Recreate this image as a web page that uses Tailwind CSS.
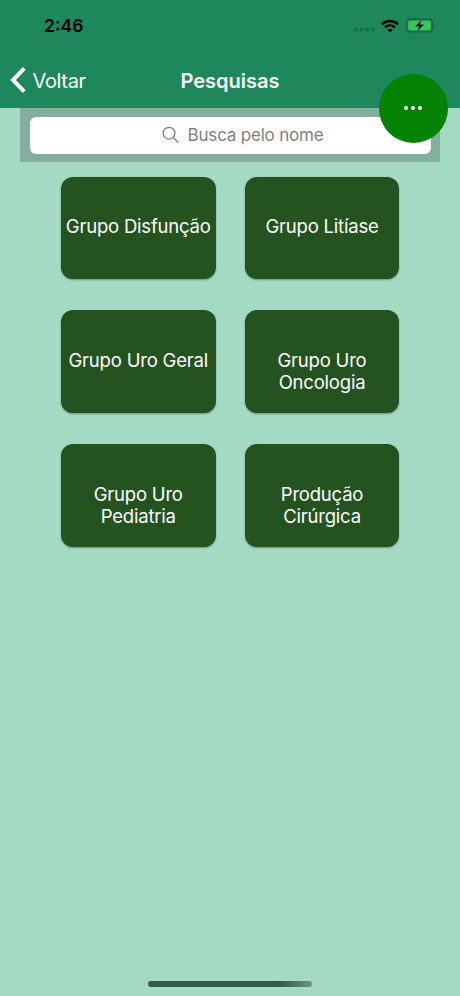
<!DOCTYPE html>
<html lang="pt-BR">

<head>
    <meta charset="UTF-8">
    <meta name="viewport" content="width=device-width, initial-scale=1.0">
    <title>Pesquisas</title>
    <script src="https://cdn.jsdelivr.net/npm/@tailwindcss/browser@4"></script>
</head>

<body class="bg-[#a4dac3] font-['Inter',sans-serif]">
    <div class="relative h-[996px] w-[460px] flex flex-col overflow-hidden">
        <!-- Header -->
        <header class="h-[108px] shrink-0 bg-[#1e875b] flex flex-col">
            <!-- Status bar -->
            <div class="h-[51px] flex justify-between items-center pl-[44px] pr-[24px] text-black">
                <span class="text-[17.5px] leading-none font-semibold">2:46</span>
                <div class="flex items-center">
                    <svg class="mr-[6px] mt-[8px]" width="21" height="5" viewBox="0 0 21 5" fill="#176e49">
                        <rect x="0" y="0.7" width="3.6" height="3.6" rx="1" />
                        <rect x="5.7" y="0.7" width="3.6" height="3.6" rx="1" />
                        <rect x="11.4" y="0.7" width="3.6" height="3.6" rx="1" />
                        <rect x="17.1" y="0.7" width="3.6" height="3.6" rx="1" />
                    </svg>
                    <svg class="mr-[7px]" width="18" height="14" viewBox="0 0 18 14" fill="none" stroke="#000">
                        <path d="M1 5.2C5.4.9 12.6.9 17 5.2" stroke-width="2.6" />
                        <path d="M4 8.3c2.9-2.6 7.1-2.6 10 0" stroke-width="2.4" />
                        <path d="M9 13.5L6.2 10.8c1.6-1.4 4-1.4 5.6 0z" fill="#000" stroke="none" />
                    </svg>
                    <svg width="30" height="15" viewBox="0 0 30 15">
                        <rect x="0.7" y="1.2" width="25.6" height="12.6" rx="3.4" fill="none" stroke="#166241" stroke-width="1.2" />
                        <rect x="2.2" y="2.7" width="22.4" height="9.6" rx="2" fill="#35c759" />
                        <path d="M27.6 5.2c1.8.7 1.8 4 0 4.7z" fill="#166241" />
                        <path d="M15.6 1.5L9.2 8.5h3.9L11.3 13.6 18 6.4h-4z" fill="#000" stroke="#2a9c50" stroke-width="0.4" />
                    </svg>
                </div>
            </div>
            <!-- Navigation -->
            <nav class="h-[57px] pt-[3px] grid grid-cols-3 items-center text-white text-[20px] leading-none">
                <a href="#" class="flex items-center pl-[10px]">
                    <svg class="mt-[-2px]" width="16" height="26" viewBox="0 0 16 26" fill="none" stroke="#fff" stroke-width="4">
                        <path d="M14.2 1.4L3 13l11.2 11.6" />
                    </svg>
                    <span class="ml-[6.5px] tracking-[-0.35px]">Voltar</span>
                </a>
                <h1 class="text-center font-semibold">Pesquisas</h1>
            </nav>
        </header>

        <!-- Search -->
        <div class="mx-[20px] h-[54px] shrink-0 bg-[#83af9c] px-[10px] pt-[8.5px]">
            <div class="h-[37px] w-[401px] bg-white rounded-[6px] flex items-center justify-center pl-[24px] text-[#7f7f7f]">
                <svg class="mr-[8px]" width="18" height="18" viewBox="0 0 18 18" fill="none" stroke="#7f7f7f" stroke-width="1.3">
                    <circle cx="7" cy="7.2" r="5.9" />
                    <path d="M11.2 11.4l4.8 4.8" stroke-linecap="round" />
                </svg>
                <span class="text-[17px] leading-none tracking-[-0.2px]">Busca pelo nome</span>
            </div>
        </div>

        <!-- Groups -->
        <main class="mt-[14.5px] ml-[61px] grid grid-cols-[154.5px_154px] gap-x-[29.5px] gap-y-[31px] text-white text-[18.5px] leading-[22.3px] text-center tracking-[-0.2px]">
            <div class="h-[102.7px] rounded-[12px] bg-[#245320] shadow-[0_1px_2px_rgba(0,0,0,0.35)] pt-[38.5px] whitespace-nowrap">Grupo Disfunção</div>
            <div class="h-[102.7px] rounded-[12px] bg-[#245320] shadow-[0_1px_2px_rgba(0,0,0,0.35)] pt-[38.5px]">Grupo Litíase</div>
            <div class="h-[102.7px] rounded-[12px] bg-[#245320] shadow-[0_1px_2px_rgba(0,0,0,0.35)] pt-[39px] whitespace-nowrap">Grupo Uro Geral</div>
            <div class="h-[102.7px] rounded-[12px] bg-[#245320] shadow-[0_1px_2px_rgba(0,0,0,0.35)] pt-[39px]">Grupo Uro<br>Oncologia</div>
            <div class="h-[102.7px] rounded-[12px] bg-[#245320] shadow-[0_1px_2px_rgba(0,0,0,0.35)] pt-[39px]">Grupo Uro<br>Pediatria</div>
            <div class="h-[102.7px] rounded-[12px] bg-[#245320] shadow-[0_1px_2px_rgba(0,0,0,0.35)] pt-[39px]">Produção<br>Cirúrgica</div>
        </main>

        <!-- Home indicator -->
        <div class="mt-auto mb-[9px] mx-auto h-[6px] w-[164px] rounded-full bg-linear-to-r from-[#345944] from-80% to-[#6e9983]"></div>

        <!-- Floating menu -->
        <button class="absolute top-[73.5px] left-[378.5px] size-[69px] rounded-full bg-[#048204] flex items-center justify-center gap-[3.4px]">
            <span class="size-[4px] rounded-full bg-white"></span>
            <span class="size-[4px] rounded-full bg-white"></span>
            <span class="size-[4px] rounded-full bg-white"></span>
        </button>
    </div>
</body>

</html>
